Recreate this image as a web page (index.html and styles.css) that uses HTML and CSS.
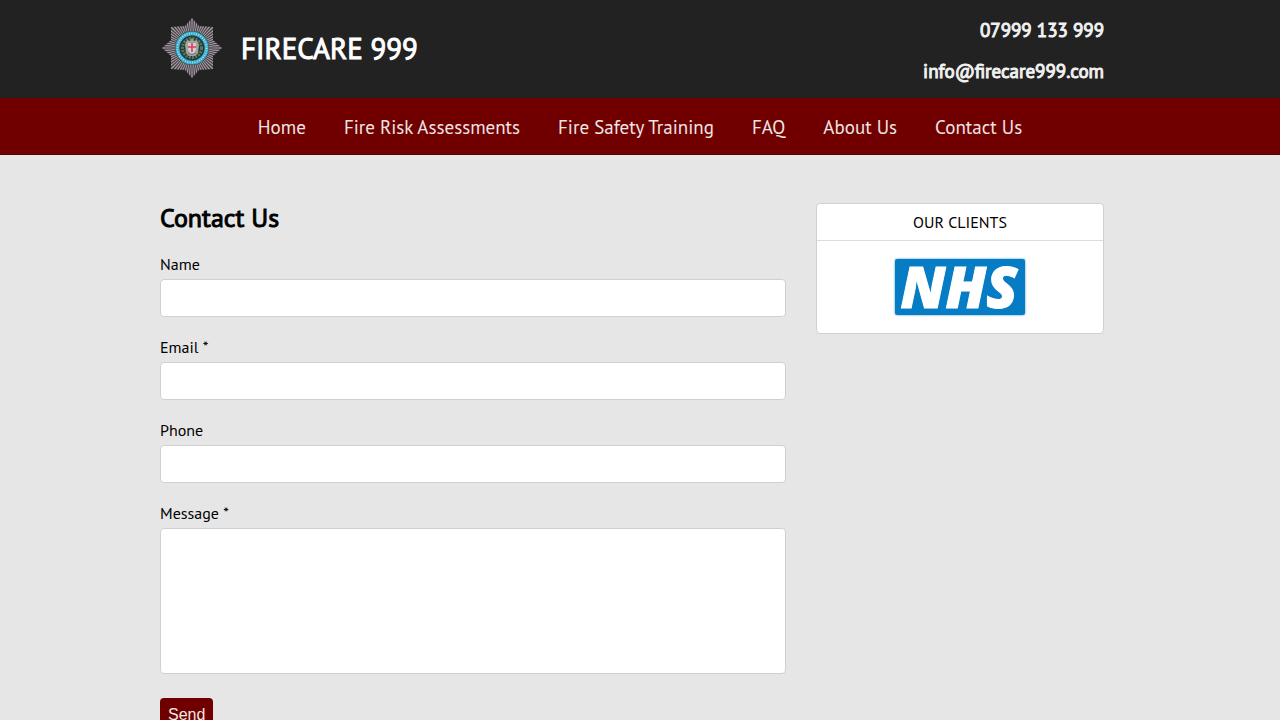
FILE: index.html
```html
<!DOCTYPE html>
<html lang="en">
<head>
<meta charset="utf-8">
<meta name="viewport" content="width=device-width, initial-scale=1">
<title>Contact Us - Firecare 999</title>
<link rel="stylesheet" href="styles.css">
</head>
<body>
<header class="site-header">
  <div class="container header-row">
    <div class="brand">
      <svg class="badge" viewBox="-32 -32 64 64" aria-hidden="true">
        <defs>
          <clipPath id="star"><polygon points="0,-30 7,-22 21,-21 21,-8 30,0 21,8 21,21 7,22 0,30 -7,22 -21,21 -21,8 -30,0 -21,-8 -21,-21 -7,-22"/></clipPath>
        </defs>
        <g clip-path="url(#star)">
          <circle r="30" fill="#39343b"/>
          <circle r="22" fill="none" stroke="#a1979f" stroke-width="18" pathLength="128" stroke-dasharray="1.15 .85" stroke-dashoffset=".57"/>
        </g>
        <circle r="17" fill="#33434d"/>
        <circle r="14.5" fill="none" stroke="#38a9ca" stroke-width="4"/>
        <circle r="14.5" fill="none" stroke="#a5e5ee" stroke-width="2" stroke-dasharray="1 1.4"/>
        <circle r="12.3" fill="#253b37"/>
        <circle r="9.5" fill="none" stroke="#557967" stroke-width="3" stroke-dasharray="2 1.2"/>
        <path d="M-5-8L-2-7 0-10 2-7 5-8 7-3 6 5 3 8H-3L-6 5-7-3Z" fill="#a4a394"/>
        <path d="M-4-5H4V2Q3 5 0 6Q-3 5-4 2Z" fill="#d2cbd3"/>
        <path d="M0-5V4M-4-1H4" stroke="#d83e5c" stroke-width="1.6"/>
        <path d="M-4 5Q0 8 4 5" fill="none" stroke="#7471a0" stroke-width="1"/>
      </svg>
      <span class="brand-name">FIRECARE 999</span>
    </div>
    <div class="contact-links">
      <a href="tel:07999133999">07999 133 999</a>
      <a href="mailto:info@firecare999.com">info@firecare999.com</a>
    </div>
  </div>
</header>
<nav class="site-nav">
  <div class="container nav-row">
    <a href="#">Home</a>
    <a href="#">Fire Risk Assessments</a>
    <a href="#">Fire Safety Training</a>
    <a href="#">FAQ</a>
    <a href="#">About Us</a>
    <a href="#">Contact Us</a>
  </div>
</nav>
<div class="container content">
  <main class="main">
    <h1>Contact Us</h1>
    <form>
      <div class="field"><label for="name">Name</label><input id="name" type="text"></div>
      <div class="field"><label for="email">Email *</label><input id="email" type="email"></div>
      <div class="field"><label for="phone">Phone</label><input id="phone" type="tel"></div>
      <div class="field"><label for="message">Message *</label><textarea id="message"></textarea></div>
      <button class="send" type="submit">Send</button>
    </form>
  </main>
  <aside class="clients">
    <h2>OUR CLIENTS</h2>
    <div class="client-logos">
      <svg class="nhs" viewBox="0 0 130 56" role="img" aria-label="NHS">
        <rect width="130" height="56" rx="2" fill="#057cc4"/>
        <text class="nhs-text" x="64" y="49" text-anchor="middle">NHS</text>
      </svg>
    </div>
  </aside>
</div>
</body>
</html>
```
FILE: styles.css
```css
* { box-sizing: border-box; }
body {
  margin: 0;
  background: #e6e6e6;
  color: #000;
  font-family: "PT Sans", "Noto Sans", sans-serif;
  font-size: 16px;
  line-height: 24px;
}
a { color: inherit; text-decoration: none; }
.container { max-width: 960px; margin: 0 auto; }
.site-header { background: #222; color: #fff; }
.header-row {
  display: flex;
  justify-content: space-between;
  align-items: flex-start;
  padding: 16px 16px 14px 0;
}
.brand { display: flex; align-items: center; gap: 17px; }
.badge { width: 64px; height: 64px; }
.brand-name { font-size: 29px; line-height: 40px; -webkit-text-stroke: 1px; }
.contact-links {
  display: flex;
  flex-direction: column;
  align-items: flex-end;
  gap: 16px;
  padding-top: 2px;
  font-size: 19px;
  line-height: 25px;
  color: #f1f1f1;
  -webkit-text-stroke: 1px;
}
.site-nav { background: #700000; border-bottom: 1px solid #5c0000; color: #f0e4e4; }
.nav-row {
  display: flex;
  flex-wrap: wrap;
  justify-content: center;
  gap: 0 38px;
  padding: 17px 0 15px;
  font-size: 19px;
}
.content {
  display: flex;
  align-items: flex-start;
  gap: 30px;
  padding: 48px 16px 48px 0;
}
.main { flex: 1; }
h1 {
  margin: 0 0 19px;
  font-size: 26px;
  line-height: 30px;
  font-weight: 400;
  -webkit-text-stroke: 1px;
}
.field { margin-bottom: 18px; }
.field label { display: block; margin-bottom: 3px; }
.field input, .field textarea {
  display: block;
  width: 100%;
  height: 38px;
  padding: 8px;
  border: 1px solid #d0d0d0;
  border-radius: 4px;
  background: #fff;
  font: inherit;
}
.field textarea { height: 146px; resize: none; margin-bottom: 24px; }
.send {
  padding: 8px;
  border: 0;
  border-radius: 4px;
  background: #700000;
  color: #f5e8e8;
  font-family: "Liberation Sans", Arial, sans-serif;
  font-size: 16px;
  line-height: 18px;
}
.clients {
  width: 288px;
  border: 1px solid #d0d0d0;
  border-radius: 4px;
  background: #fff;
}
.clients h2 {
  margin: 0;
  padding: 6px;
  border-bottom: 1px solid #ddd;
  font-size: 16px;
  font-weight: 400;
  text-align: center;
}
.client-logos { display: flex; justify-content: center; padding: 18px; }
.nhs { width: 130px; height: 56px; border-radius: 2px; box-shadow: 0 0 2px #057cc4; overflow: visible; }
.nhs-text { font: italic 800 57px "Open Sans", sans-serif; fill: #fff; stroke: #fff; stroke-width: 1px; }
```
